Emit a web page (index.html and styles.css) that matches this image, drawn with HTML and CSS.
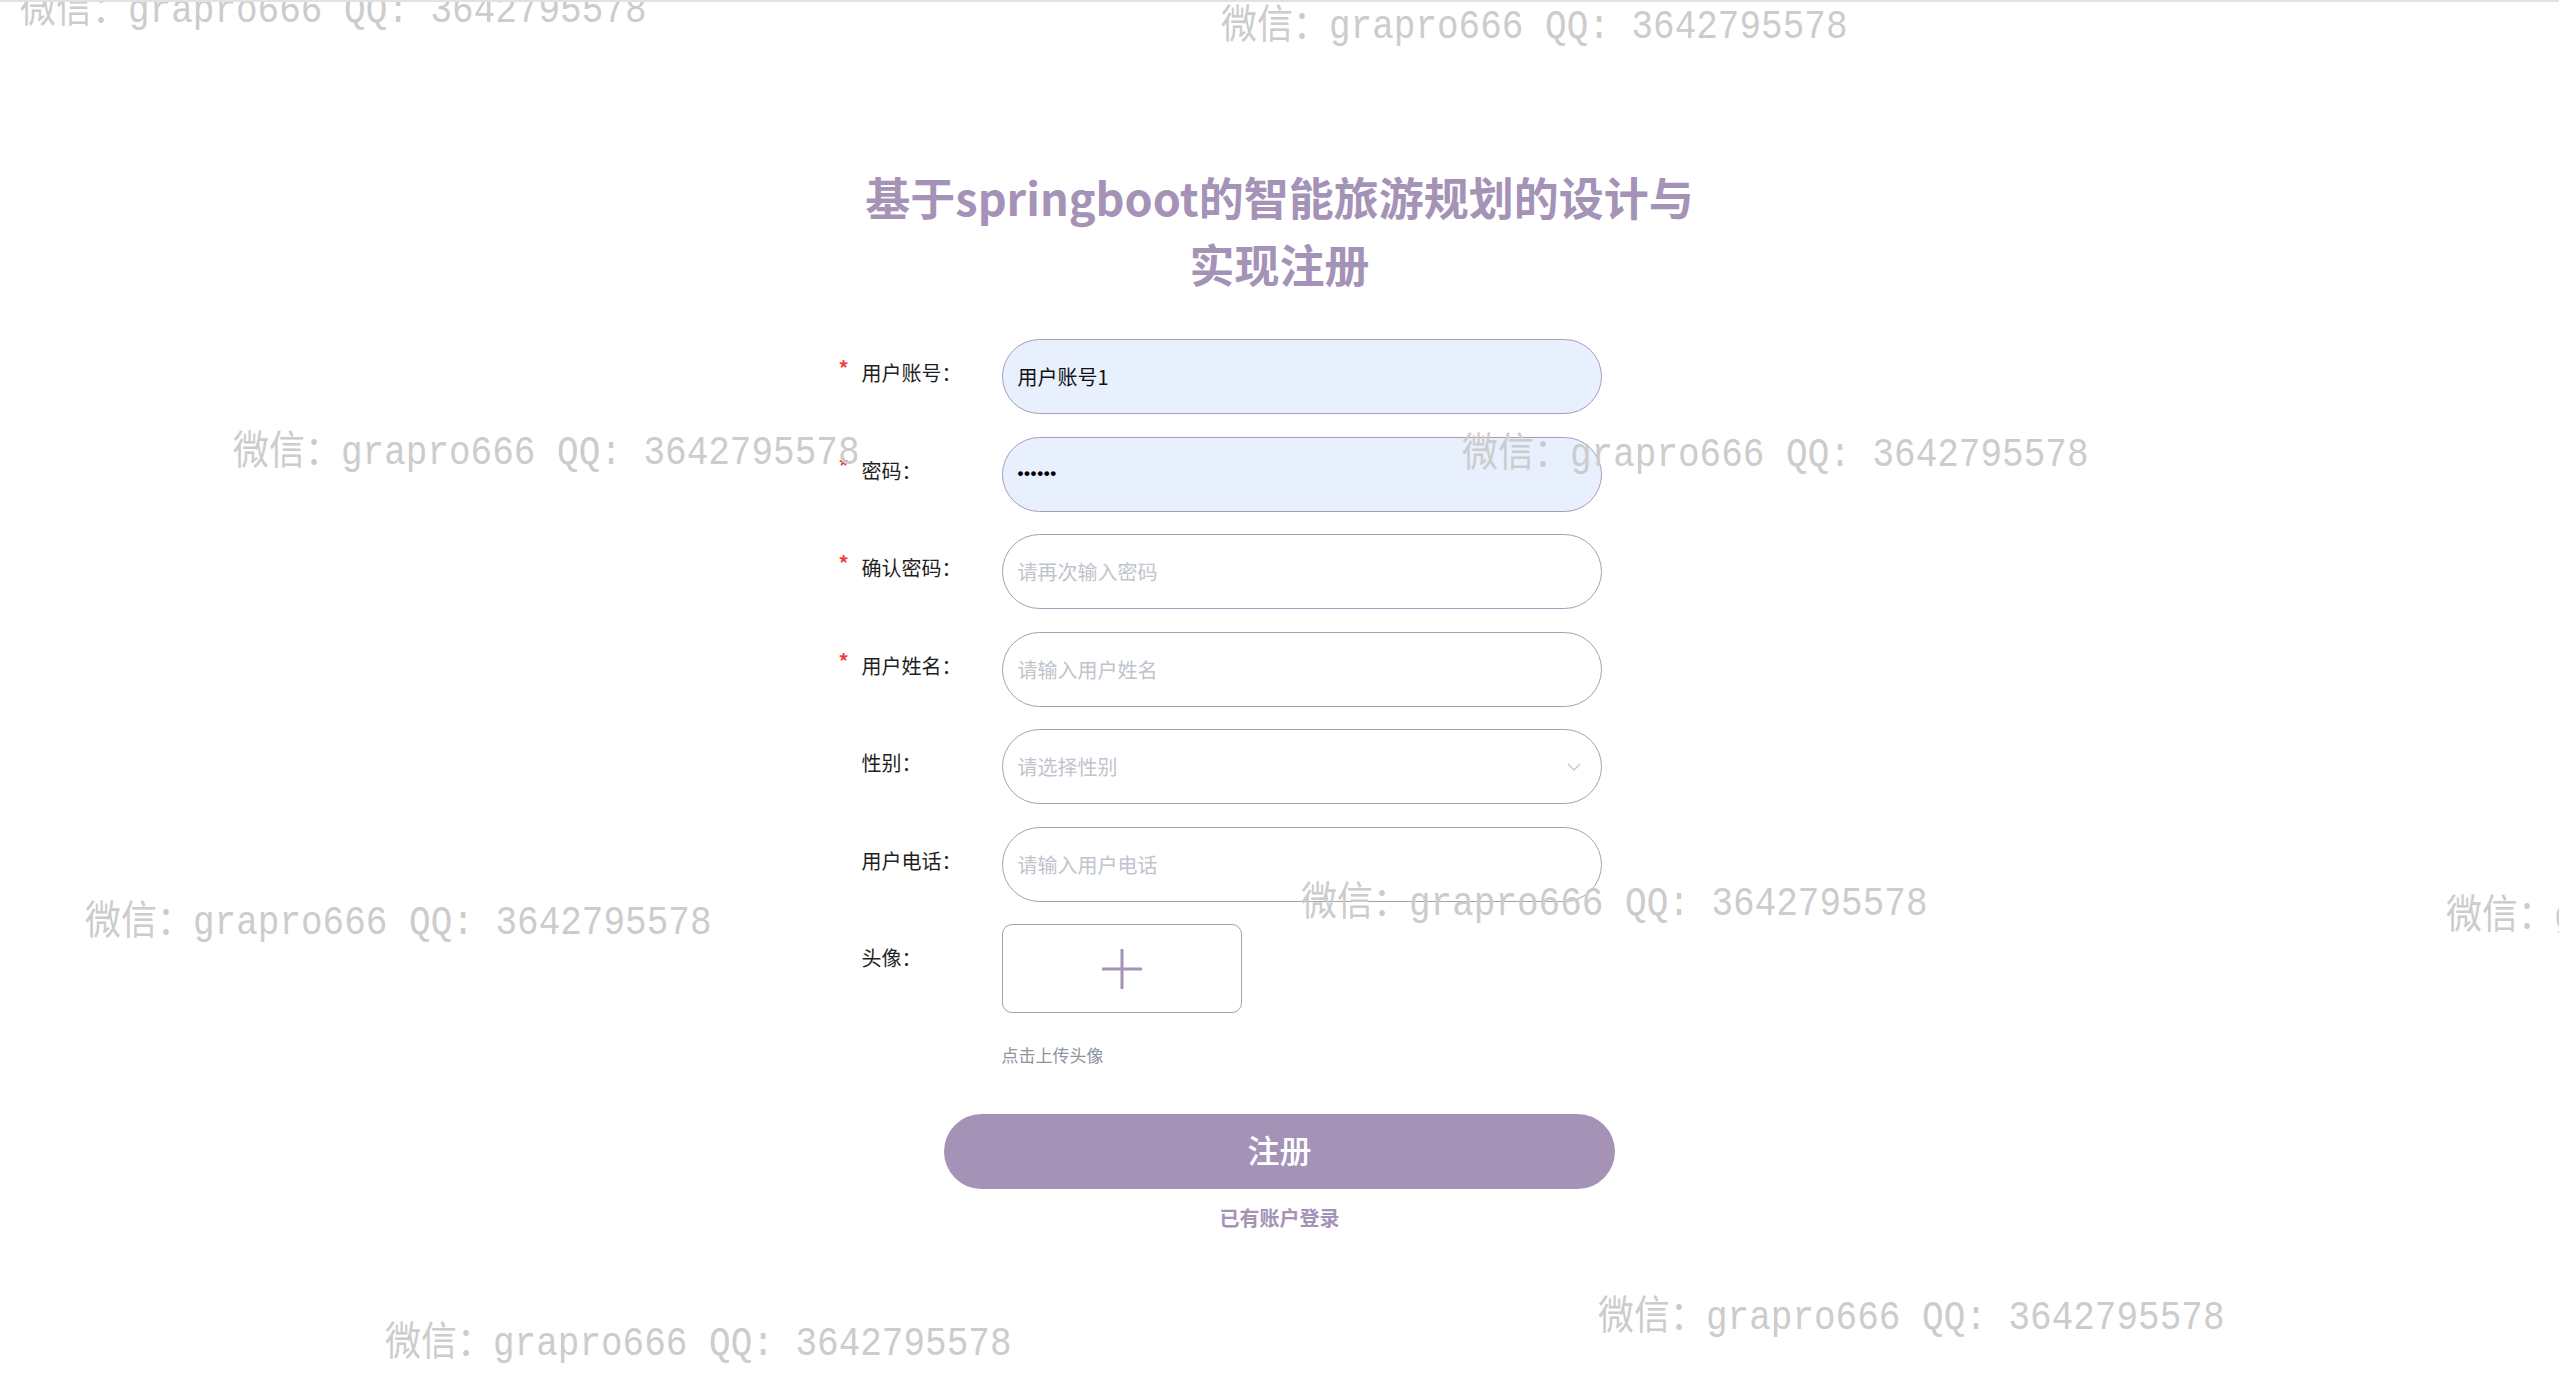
FILE: index.html
```html
<!DOCTYPE html>
<html lang="zh">
<head>
<meta charset="utf-8">
<title>注册</title>
<link rel="stylesheet" href="styles.css">
</head>
<body>
<div class="page">
  <h1 class="title">基于springboot的智能旅游规划的设计与实现注册</h1>
  <form class="form">
    <div class="row">
      <label class="label required">用户账号：</label>
      <div class="field filled">用户账号1</div>
    </div>
    <div class="row">
      <label class="label required">密码：</label>
      <div class="field filled dots">••••••</div>
    </div>
    <div class="row">
      <label class="label required">确认密码：</label>
      <div class="field placeholder">请再次输入密码</div>
    </div>
    <div class="row">
      <label class="label required">用户姓名：</label>
      <div class="field placeholder">请输入用户姓名</div>
    </div>
    <div class="row">
      <label class="label">性别：</label>
      <div class="field placeholder select">
        <span>请选择性别</span>
        <svg class="chev" width="14" height="8" viewBox="0 0 14 8"><path d="M1 1 L7 7 L13 1" fill="none" stroke="#c0c4cc" stroke-width="1.3"/></svg>
      </div>
    </div>
    <div class="row">
      <label class="label">用户电话：</label>
      <div class="field placeholder">请输入用户电话</div>
    </div>
    <div class="row avatar-row">
      <label class="label">头像：</label>
      <div class="avatar-col">
        <div class="uploader">
          <svg width="40" height="40" viewBox="0 0 40 40"><path d="M20 1 V39 M1 20 H39" stroke="#a493b6" stroke-width="3" stroke-linecap="round"/></svg>
        </div>
        <div class="tip">点击上传头像</div>
      </div>
    </div>
    <button type="button" class="submit">注册</button>
    <a class="login-link">已有账户登录</a>
  </form>

  <div class="watermarks">
    <span class="wm wm1">微信：grapro666 QQ: 3642795578</span>
    <span class="wm wm2">微信：grapro666 QQ: 3642795578</span>
    <span class="wm wm3">微信：grapro666 QQ: 3642795578</span>
    <span class="wm wm4">微信：grapro666 QQ: 3642795578</span>
    <span class="wm wm5">微信：grapro666 QQ: 3642795578</span>
    <span class="wm wm6">微信：grapro666 QQ: 3642795578</span>
    <span class="wm wm7">微信：grapro666 QQ: 3642795578</span>
    <span class="wm wm8">微信：grapro666 QQ: 3642795578</span>
    <span class="wm wm9">微信：grapro666 QQ: 3642795578</span>
  </div>
</div>
</body>
</html>
```
FILE: styles.css
```css
html, body {
  margin: 0;
  padding: 0;
  background: #fff;
}
body {
  font-family: "Noto Sans CJK SC", "Noto Sans", sans-serif;
  color: #222;
  overflow: hidden;
}
.page {
  position: relative;
  min-height: 1399px;
  border-top: 2px solid #e2e2e2;
  box-sizing: border-box;
}
.title {
  width: 870px;
  margin: 161px auto 0;
  text-align: center;
  font-size: 45px;
  line-height: 67px;
  font-weight: 700;
  color: #a493b6;
}
.form {
  width: 876px;
  margin: 42px auto 0;
  display: flex;
  flex-direction: column;
}
.row {
  display: flex;
  align-items: flex-start;
  margin-bottom: 22.5px;
}
.label {
  width: 160px;
  flex: none;
  height: 68px;
  line-height: 68px;
  font-size: 20px;
  color: #1f1f1f;
  padding-left: 20px;
  box-sizing: border-box;
  position: relative;
}
.label.required::before {
  content: "*";
  color: #f23c3c;
  position: absolute;
  left: -3px;
  top: -5px;
  font-size: 20px;
  font-weight: 700;
}
.field {
  width: 600px;
  height: 75px;
  box-sizing: border-box;
  border: 1px solid #a99bba;
  border-radius: 38px;
  padding: 0 15px;
  display: flex;
  align-items: center;
  font-size: 20px;
  color: #111;
}
.field.filled {
  background: #e8f0fe;
}
.field.dots {
  font-family: "Liberation Sans", sans-serif;
  font-size: 17px;
  font-weight: 700;
  letter-spacing: 0.6px;
  color: #000;
}
.field.placeholder {
  color: #c0c4cc;
}
.field.select {
  justify-content: space-between;
  padding-right: 20px;
}
.avatar-row {
  margin-bottom: 0;
}
.avatar-col {
  display: flex;
  flex-direction: column;
}
.uploader {
  width: 240px;
  height: 89px;
  box-sizing: border-box;
  border: 1px solid #a99bba;
  border-radius: 10px;
  display: flex;
  align-items: center;
  justify-content: center;
}
.tip {
  margin-top: 30px;
  font-size: 17px;
  line-height: 24px;
  color: #8e949c;
}
.submit {
  align-self: center;
  margin-top: 47px;
  width: 671px;
  height: 75px;
  padding: 0 0 6px;
  border: none;
  border-radius: 38px;
  background: #a493b6;
  color: #fff;
  font-family: "Noto Sans CJK SC", "Noto Sans", sans-serif;
  font-size: 32px;
  font-weight: 500;
}
.login-link {
  align-self: center;
  margin-top: 14px;
  font-size: 20px;
  line-height: 30px;
  font-weight: 700;
  color: #a493b6;
}
.watermarks {
  position: absolute;
  inset: 0;
  pointer-events: none;
  overflow: hidden;
}
.wm {
  position: absolute;
  white-space: nowrap;
  font-family: "Liberation Mono", "Noto Sans CJK SC", monospace;
  font-size: 36px;
  line-height: 44px;
  color: #cccccc;
  transform: scaleY(1.12);
  transform-origin: left center;
}
.wm1 { left: 20px; top: -12px; }
.wm2 { left: 1221px; top: 4px; }
.wm3 { left: 233px; top: 430px; }
.wm4 { left: 1462px; top: 432px; }
.wm5 { left: 85px; top: 900px; }
.wm6 { left: 1301px; top: 881px; }
.wm7 { left: 2446px; top: 894px; }
.wm8 { left: 385px; top: 1321px; }
.wm9 { left: 1598px; top: 1295px; }
```
